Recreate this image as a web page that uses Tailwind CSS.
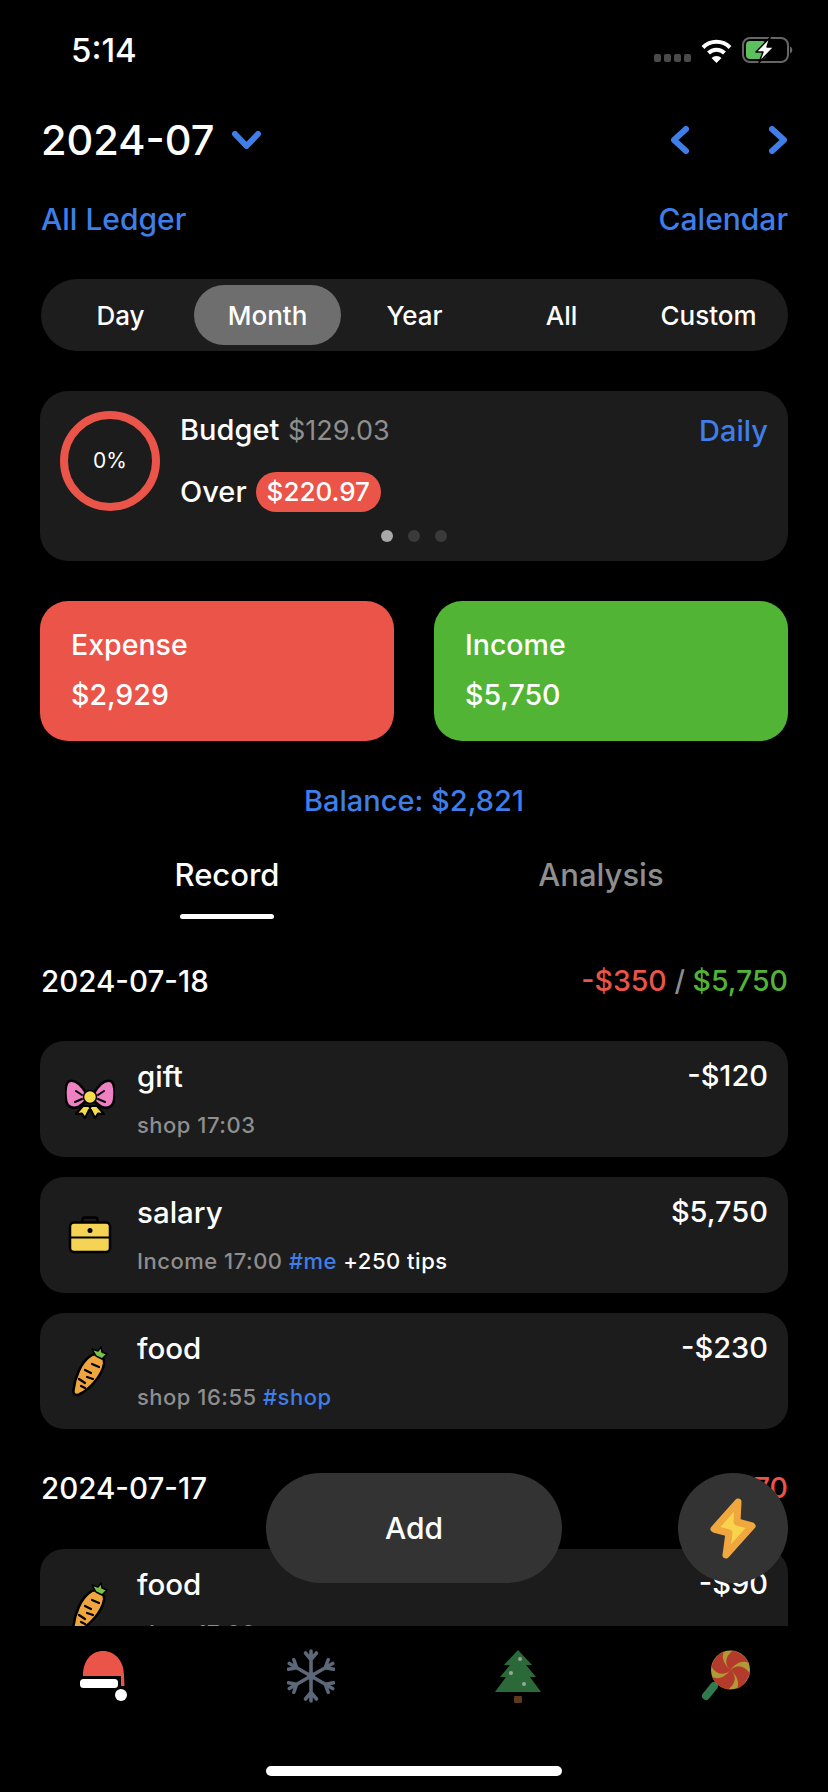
<!DOCTYPE html>
<html><head><meta charset="utf-8">
<script src="https://cdn.jsdelivr.net/npm/@tailwindcss/browser@4"></script>
</head>
<body class="bg-black">
<svg width="0" height="0" class="absolute">
<defs>
<symbol id="carrot" viewBox="0 0 36 51">
<path d="M17 11C24 5 33 10 32 18C30 30 17 44 7 48.500C3 50 1 48 1.500 44C3 31 9 17 17 11Z" fill="#f0a63f" stroke="#000" stroke-width="2.500" stroke-linejoin="round"/>
<path d="M24 10L20 3L26 5L29 1L30 6L35 8L30 13Z" fill="#7cc04a" stroke="#000" stroke-width="1.500" stroke-linejoin="round"/>
<path d="M20 18L27 21M13 24L19 27M15 31L21 33M7 33L13 37M9 40L13 42" stroke="#000" stroke-width="2.200" stroke-linecap="round"/>
</symbol>
</defs>
</svg>
<div class="relative w-[828px] h-[1792px] overflow-hidden bg-black text-white flex flex-col font-['Inter',sans-serif]">
  <!-- status bar -->
  <div class="h-[96px] shrink-0 px-[39px] flex justify-between items-start relative">
    <div class="ml-[32px] mt-[31px] text-[33px] leading-[38px] font-medium">5:14</div>
    <div class="flex items-center mt-[37px] -mr-[5px] gap-[10px]">
      <div class="flex gap-[3px] mt-[16px]">
        <span class="w-[7px] h-[8px] rounded-[2px] bg-[#4a4a4a]"></span><span class="w-[7px] h-[8px] rounded-[2px] bg-[#4a4a4a]"></span><span class="w-[7px] h-[8px] rounded-[2px] bg-[#4a4a4a]"></span><span class="w-[7px] h-[8px] rounded-[2px] bg-[#4a4a4a]"></span>
      </div>
      <svg width="31" height="25" viewBox="0 0 31 25"><path d="M2 9.500A19 19 0 0 1 29 9.500M7.500 15A11.500 11.500 0 0 1 23.500 15" fill="none" stroke="#fff" stroke-width="4"/><path d="M15.500 25L10.500 20A7 7 0 0 1 20.500 20Z" fill="#fff"/></svg>
      <svg width="52" height="26" viewBox="0 0 52 26"><rect x="1" y="1" width="45" height="24" rx="7" fill="none" stroke="#666" stroke-width="2"/><path d="M48 9.500C51 10.500 51 15.500 48 16.500Z" fill="#666"/><rect x="4" y="4" width="20" height="18" rx="4" fill="#5cc05c"/><path d="M28 .5L14 15H21L17 25.500L32 10H25Z" fill="#fff" stroke="#000" stroke-width="1.500" stroke-linejoin="round"/></svg>
    </div>
  </div>

  <div class="shrink-0 px-[41px]">
    <!-- header -->
    <div class="h-[88px] flex items-center justify-between">
      <div class="flex items-center gap-[18px]">
        <span class="text-[41.500px] leading-[48px] font-medium">2024-07</span>
        <svg width="29" height="18" viewBox="0 0 29 18" fill="none" stroke="#3f7ee8" stroke-width="6" stroke-linecap="round" stroke-linejoin="round"><path d="M3 3L14.500 15L26 3"/></svg>
      </div>
      <div class="flex items-center gap-[80px]">
        <svg width="18" height="28" viewBox="0 0 18 28" fill="none" stroke="#3f7ee8" stroke-width="6" stroke-linecap="round" stroke-linejoin="round"><path d="M15 3L3 14L15 25"/></svg>
        <svg width="18" height="28" viewBox="0 0 18 28" fill="none" stroke="#3f7ee8" stroke-width="6" stroke-linecap="round" stroke-linejoin="round"><path d="M3 3L15 14L3 25"/></svg>
      </div>
    </div>
    <!-- links -->
    <div class="h-[36px] mt-[17px] -mr-px flex items-center justify-between text-[30px] font-medium text-[#3f7ee8]">
      <span>All Ledger</span><span>Calendar</span>
    </div>
    <!-- segment -->
    <div class="mt-[42px] h-[72px] w-[747px] rounded-[36px] bg-[#1d1d1d] p-[6px] grid grid-cols-5 text-[26px] font-medium text-center">
      <div class="flex items-center justify-center">Day</div>
      <div class="flex items-center justify-center"><div class="w-[147px] h-[60px] rounded-[30px] bg-[#6e6e6e] flex items-center justify-center">Month</div></div>
      <div class="flex items-center justify-center">Year</div>
      <div class="flex items-center justify-center">All</div>
      <div class="flex items-center justify-center">Custom</div>
    </div>
  </div>

  <div class="shrink-0 pl-[40px] pr-[40px]">
    <!-- budget -->
    <div class="mt-[40px] relative h-[170px] rounded-[28px] bg-[#1c1c1c] pl-[20px] pr-[20px] pt-[20px] flex">
      <div class="w-[100px] h-[100px] rounded-full border-[8px] border-[#ea5449] flex items-center justify-center text-[21px] shrink-0">0%</div>
      <div class="ml-[20px] flex-1 text-[29px] font-medium leading-[32px]">
        <div class="flex items-center justify-between mt-[3px]">
          <div>Budget <span class="text-[27px] font-normal text-[#8e8e8e] ml-[1px]">$129.03</span></div>
          <span class="text-[#3f7ee8]">Daily</span>
        </div>
        <div class="flex items-center mt-[25px]">
          <span>Over</span>
          <span class="ml-[9px] h-[40px] px-[11px] rounded-[20px] bg-[#ea5449] text-[26px] font-medium flex items-center">$220.97</span>
        </div>
      </div>
      <div class="absolute left-0 right-0 bottom-[19px] flex justify-center gap-[15px]">
        <span class="w-[12px] h-[12px] rounded-full bg-[#a8a8a8]"></span><span class="w-[12px] h-[12px] rounded-full bg-[#3a3a3a]"></span><span class="w-[12px] h-[12px] rounded-full bg-[#3a3a3a]"></span>
      </div>
    </div>
    <!-- totals -->
    <div class="mt-[40px] flex gap-[40px]">
      <div class="flex-1 h-[140px] rounded-[28px] bg-[#ea5449] pl-[31px] pt-[28px]">
        <div class="text-[28.500px] leading-[32px] font-medium">Expense</div>
        <div class="text-[28.500px] leading-[34px] font-medium mt-[17px]">$2,929</div>
      </div>
      <div class="flex-1 h-[140px] rounded-[28px] bg-[#52b435] pl-[31px] pt-[28px]">
        <div class="text-[28.500px] leading-[32px] font-medium">Income</div>
        <div class="text-[28.500px] leading-[34px] font-medium mt-[17px]">$5,750</div>
      </div>
    </div>
    <div class="mt-[43px] h-[34px] leading-[34px] text-center text-[29px] font-medium text-[#3f7ee8]">Balance: $2,821</div>
    <!-- tabs -->
    <div class="mt-[39px] grid grid-cols-2 text-center text-[31px] leading-[36px] font-medium">
      <div class="flex flex-col items-center"><span>Record</span><span class="mt-[21px] w-[94px] h-[5px] rounded-[3px] bg-white"></span></div>
      <div class="text-[#8e8e8e]">Analysis</div>
    </div>
  </div>

  <!-- list -->
  <div class="flex-1 min-h-0 overflow-hidden px-[40px]">
    <div class="mt-[46px] h-[32px] flex items-center justify-between font-medium">
      <span class="pl-px text-[29.500px]">2024-07-18</span>
      <span class="text-[28.500px]"><span class="text-[#ea5449]">-$350</span> <span class="text-[#8e8e8e]">/</span> <span class="text-[#52b435]">$5,750</span></span>
    </div>
    <div class="mt-[44px] flex flex-col gap-[20px]">
      <div class="h-[116px] rounded-[24px] bg-[#1c1c1c] flex relative">
        <div class="w-[97px] shrink-0 flex items-center justify-center pl-[2px]">
          <svg width="50" height="40" viewBox="0 0 50 40">
            <path d="M18 27L11 35L17 34.500L20 39L26 27ZM32 27L39 35L33 34.500L30 39L24 27Z" fill="#f7dc50" stroke="#000" stroke-width="2" stroke-linejoin="round"/>
            <path d="M21 14C16 6 10 1 5 2C0 3 0 14 1 21C2 28 8 30 13 28C17 26 20 23 22 21Z" fill="#f080c4" stroke="#000" stroke-width="2.500" stroke-linejoin="round"/>
            <path d="M29 14C34 6 40 1 45 2C50 3 50 14 49 21C48 28 42 30 37 28C33 26 30 23 28 21Z" fill="#f080c4" stroke="#000" stroke-width="2.500" stroke-linejoin="round"/>
            <path d="M11 12L17 16M10 23L17 20M39 12L33 16M40 23L33 20" stroke="#000" stroke-width="2" stroke-linecap="round"/>
            <circle cx="25" cy="18" r="6.500" fill="#f7dc50" stroke="#000" stroke-width="1.500"/>
          </svg>
        </div>
        <div class="flex-1 pt-[19px]">
          <div class="text-[29.500px] leading-[32px] font-medium">gift</div>
          <div class="mt-[20px] text-[22px] tracking-[.5px] leading-[26px] font-medium text-[#8e8e8e]">shop 17:03</div>
        </div>
        <div class="pr-[20px] pt-[19px] text-[29px] leading-[32px] font-medium">-$120</div>
      </div>
      <div class="h-[116px] rounded-[24px] bg-[#1c1c1c] flex relative">
        <div class="w-[97px] shrink-0 flex items-center justify-center pl-[2px]">
          <svg width="44" height="38" viewBox="0 0 44 38">
            <rect x="14.500" y="1.500" width="15" height="8" rx="2.500" fill="none" stroke="#000" stroke-width="2.500"/>
            <rect x="2" y="6.500" width="40" height="29.500" rx="4" fill="#f5d455" stroke="#000" stroke-width="2.500"/>
            <path d="M2 21.500H42" stroke="#000" stroke-width="2"/>
            <circle cx="22" cy="14.500" r="2.500" fill="#000"/>
          </svg>
        </div>
        <div class="flex-1 pt-[19px]">
          <div class="text-[29.500px] leading-[32px] font-medium">salary</div>
          <div class="mt-[20px] text-[22px] tracking-[.5px] leading-[26px] font-medium text-[#8e8e8e]">Income 17:00 <span class="text-[#3f7ee8]">#me</span> <span class="text-white">+250 tips</span></div>
        </div>
        <div class="pr-[20px] pt-[19px] text-[29px] leading-[32px] font-medium">$5,750</div>
      </div>
      <div class="h-[116px] rounded-[24px] bg-[#1c1c1c] flex relative">
        <div class="w-[97px] shrink-0 flex items-center justify-center pl-[2px]">
          <svg width="36" height="51"><use href="#carrot"/></svg>
        </div>
        <div class="flex-1 pt-[19px]">
          <div class="text-[29.500px] leading-[32px] font-medium">food</div>
          <div class="mt-[20px] text-[22px] tracking-[.5px] leading-[26px] font-medium text-[#8e8e8e]">shop 16:55 <span class="text-[#3f7ee8]">#shop</span></div>
        </div>
        <div class="pr-[20px] pt-[19px] text-[29px] leading-[32px] font-medium">-$230</div>
      </div>
    </div>
    <div class="mt-[43px] h-[32px] flex items-center justify-between font-medium">
      <span class="pl-px text-[29.500px]">2024-07-17</span>
      <span class="text-[28.500px] text-[#ea5449]">-$570</span>
    </div>
    <div class="mt-[45px] h-[116px] rounded-[24px] bg-[#1c1c1c] flex relative">
      <div class="w-[97px] shrink-0 flex items-center justify-center pl-[2px]">
        <svg width="36" height="51"><use href="#carrot"/></svg>
      </div>
      <div class="flex-1 pt-[19px]">
        <div class="text-[29.500px] leading-[32px] font-medium">food</div>
        <div class="mt-[20px] text-[22px] tracking-[.5px] leading-[26px] font-medium text-[#8e8e8e]">shop 17:00</div>
      </div>
      <div class="pr-[20px] pt-[19px] text-[29px] leading-[32px] font-medium">-$90</div>
    </div>
  </div>

  <!-- tab bar -->
  <div class="h-[166px] shrink-0 bg-black grid grid-cols-4 pt-[25px] items-start justify-items-center">
    <svg width="47" height="50" viewBox="0 0 47 50">
      <path d="M3 25C3 10 11 0 23 0C35 0 44 10 44 24L44.500 35L41 35L41 25Z" fill="#ea5449"/>
      <rect x="0" y="28" width="38" height="9" rx="3.500" fill="#fff"/>
      <circle cx="41" cy="44" r="6" fill="#fff"/>
    </svg>
    <svg width="48" height="54" viewBox="-24 -27 48 54" fill="none" stroke="#5c6777" stroke-width="3.600" stroke-linecap="round" stroke-linejoin="round" class="-mt-[2px]">
      <path d="M0 0V-25M-5.500 -23L0 -16.500L5.500 -23"/>
      <g transform="rotate(60)"><path d="M0 0V-25M-5.500 -23L0 -16.500L5.500 -23"/></g>
      <g transform="rotate(120)"><path d="M0 0V-25M-5.500 -23L0 -16.500L5.500 -23"/></g>
      <g transform="rotate(180)"><path d="M0 0V-25M-5.500 -23L0 -16.500L5.500 -23"/></g>
      <g transform="rotate(240)"><path d="M0 0V-25M-5.500 -23L0 -16.500L5.500 -23"/></g>
      <g transform="rotate(300)"><path d="M0 0V-25M-5.500 -23L0 -16.500L5.500 -23"/></g>
      <circle r="4" fill="#5c6777" stroke="none"/>
    </svg>
    <svg width="46" height="53" viewBox="0 0 46 53" class="-mt-px">
      <path d="M23 0L37 15H31L41 27H35L46 42H0L11 27H5L15 15H9Z" fill="#2b6a38"/>
      <rect x="19" y="46" width="8" height="7" rx="1" fill="#5d3a1e"/>
      <circle cx="25" cy="9" r="2" fill="#9aa5a0"/><circle cx="16" cy="23" r="2" fill="#9aa5a0"/><circle cx="29" cy="34" r="2" fill="#9aa5a0"/>
    </svg>
    <svg width="50" height="52" viewBox="0 0 50 52" class="-mt-px">
      <path d="M14 36L6 46" stroke="#2f7a4e" stroke-width="8" stroke-linecap="round"/>
      <circle cx="30.500" cy="20" r="19.500" fill="#b09a35"/>
      <path d="M30.500 20C24 14 25 6 33 .7C40 2 46 7 49 13C42 10 36 13 30.500 20Z" fill="#b43a2b"/>
      <path d="M30.500 20C36.500 14 44 15 49.500 23C48 30 43 36 37 39C40 32 37 26 30.500 20Z" fill="#b43a2b"/>
      <path d="M30.500 20C37 26 36 34 28 39.500C21 38 15 33 12 27C19 30 25 27 30.500 20Z" fill="#b43a2b"/>
      <path d="M30.500 20C24.500 26 17 25 11.500 17C13 10 18 4 24 1C21 8 24 14 30.500 20Z" fill="#b43a2b"/>
    </svg>
  </div>

  <!-- floating -->
  <div class="absolute left-[266px] top-[1473px] w-[296px] h-[110px] rounded-[55px] bg-[#333333] flex items-center justify-center text-[30px] font-medium">Add</div>
  <div class="absolute left-[678px] top-[1473px] w-[110px] h-[110px] rounded-full bg-[#333333] flex items-center justify-center">
    <svg width="48" height="65" viewBox="0 0 48 65"><path d="M29 6L5 33L20 37L17 59L43 30L28 26Z" fill="#f8d44c" stroke="#f0a83e" stroke-width="7" stroke-linejoin="round"/></svg>
  </div>
  <div class="absolute left-[266px] top-[1766px] w-[296px] h-[10px] rounded-[5px] bg-white"></div>
</div>
</body></html>
